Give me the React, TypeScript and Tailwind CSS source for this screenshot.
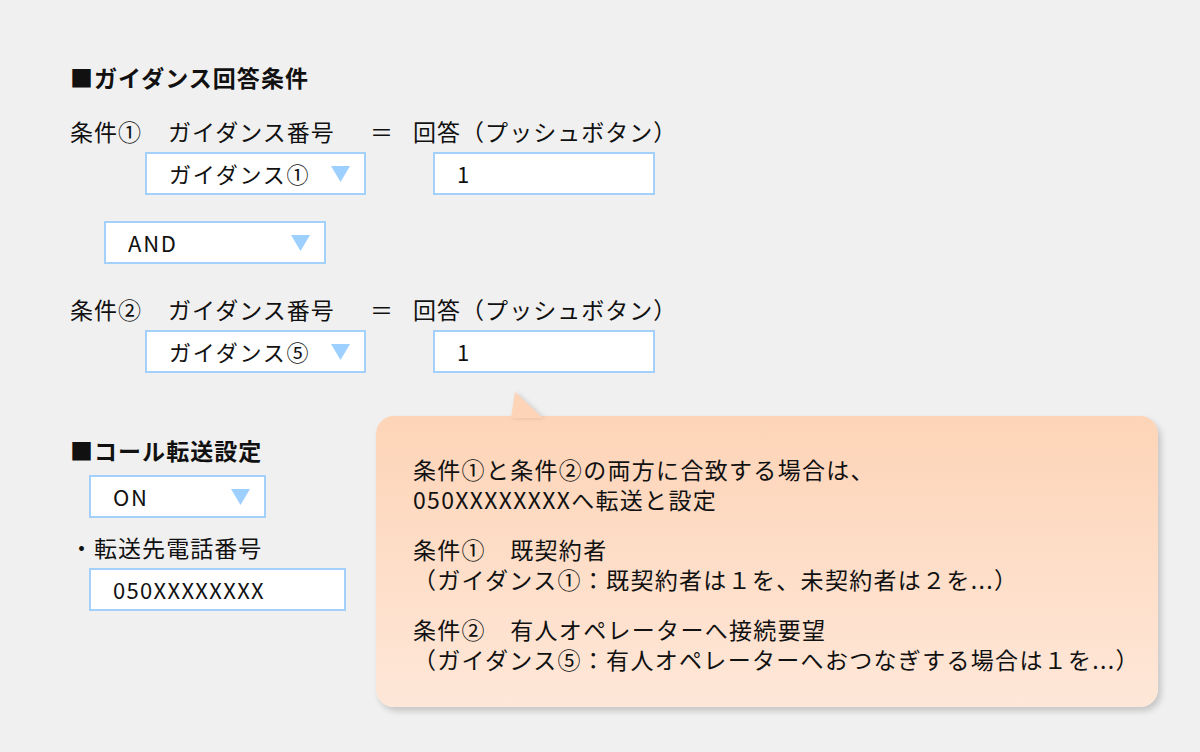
const font = {
  fontFamily: '"Noto Sans CJK JP", "Noto Sans", sans-serif',
};

function Caret() {
  return (
    <svg width="19" height="16" viewBox="0 0 19 16" className="shrink-0">
      <polygon points="0,0 19,0 9.5,16" fill="#9dcfff" />
    </svg>
  );
}

function SelectBox({ label, width }: { label: string; width: string }) {
  return (
    <div
      className={`flex h-[43px] items-center justify-between border-2 border-[#a3d1fb] bg-white pl-[22px] pr-[14px] ${width}`}
    >
      <span className="text-[22px] tracking-[0.08em] text-[#111]">{label}</span>
      <Caret />
    </div>
  );
}

function InputBox({ value, width }: { value: string; width: string }) {
  return (
    <div
      className={`flex h-[43px] items-center border-2 border-[#a3d1fb] bg-white pl-[22px] ${width}`}
    >
      <span className="text-[22px] tracking-[0.06em] text-[#111]">{value}</span>
    </div>
  );
}

function ConditionRow({ num }: { num: string }) {
  return (
    <div className="flex h-[32px] items-center text-[23px] leading-[32px] tracking-[0.045em] text-[#111]">
      <span className="w-[98px]">条件{num}</span>
      <span className="w-[202px]">ガイダンス番号</span>
      <span className="w-[43px]">＝</span>
      <span>回答（プッシュボタン）</span>
    </div>
  );
}

function ConditionInputs({ guidance }: { guidance: string }) {
  return (
    <div className="ml-[75px] flex gap-[67px]">
      <SelectBox label={guidance} width="w-[221px]" />
      <InputBox value="1" width="w-[222px]" />
    </div>
  );
}

export default function App() {
  const notes = [
    ["条件①と条件②の両方に合致する場合は、", "050XXXXXXXXへ転送と設定"],
    ["条件①　既契約者", "（ガイダンス①：既契約者は１を、未契約者は２を...）"],
    ["条件②　有人オペレーターへ接続要望", "（ガイダンス⑤：有人オペレーターへおつなぎする場合は１を...）"],
  ];

  return (
    <div style={font} className="h-[752px] w-[1200px] overflow-hidden bg-[#f0f0f0] pl-[70px] pt-[61px] text-[#111]">
      <h2 className="text-[23px] font-bold leading-[32px] tracking-[0.045em]">■ガイダンス回答条件</h2>

      <div className="mt-[22px]">
        <ConditionRow num="①" />
      </div>
      <div className="mt-[5px]">
        <ConditionInputs guidance="ガイダンス①" />
      </div>

      <div className="ml-[34px] mt-[26px]">
        <SelectBox label="AND" width="w-[222px]" />
      </div>

      <div className="mt-[29px]">
        <ConditionRow num="②" />
      </div>
      <div className="mt-[5px]">
        <ConditionInputs guidance="ガイダンス⑤" />
      </div>

      <div className="flex items-start">
        <div className="w-[306px] pt-[61px]">
          <h2 className="text-[23px] font-bold leading-[32px] tracking-[0.045em]">■コール転送設定</h2>
          <div className="ml-[19px] mt-[9px]">
            <SelectBox label="ON" width="w-[177px]" />
          </div>
          <p className="mt-[13px] text-[23px] leading-[32px] tracking-[0.045em]">・転送先電話番号</p>
          <div className="ml-[19px] mt-[5px]">
            <InputBox value="050XXXXXXXX" width="w-[257px]" />
          </div>
        </div>

        <div className="relative mt-[43px] h-[291px] w-[782px] rounded-[18px] bg-gradient-to-b from-[#fdd4b7] to-[#fee7d8] pl-[37px] pt-[38px] shadow-[3px_4px_6px_rgba(0,0,0,0.18)]">
          <svg
            width="40"
            height="27"
            viewBox="0 0 40 27"
            className="absolute left-[131px] top-[-25px] drop-shadow-[2px_0_2px_rgba(0,0,0,0.12)]"
          >
            <polygon points="4,27 8,1 36,27" fill="#fdd4b7" />
          </svg>
          <div className="flex flex-col gap-[20px] text-[23px] leading-[30px] tracking-[0.057em]">
            {notes.map((lines) => (
              <div key={lines[0]}>
                {lines.map((line) => (
                  <p key={line}>{line}</p>
                ))}
              </div>
            ))}
          </div>
        </div>
      </div>
    </div>
  );
}
